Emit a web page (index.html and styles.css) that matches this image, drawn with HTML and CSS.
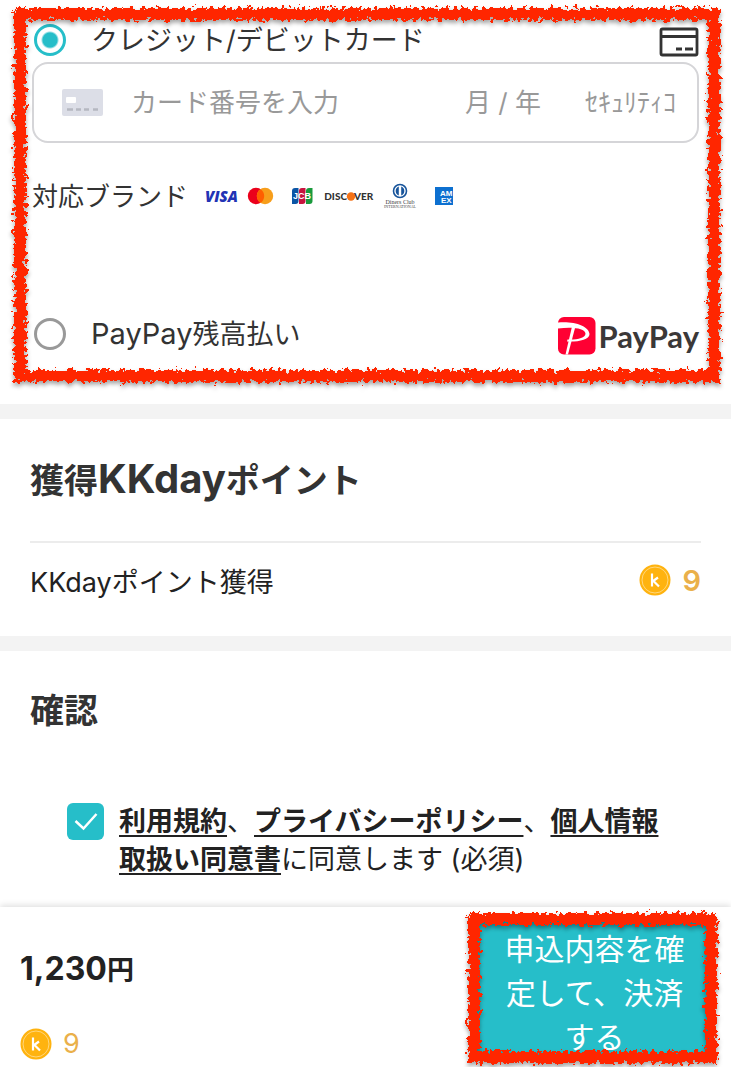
FILE: index.html
```html
<!DOCTYPE html>
<html lang="ja">
<head>
  <meta charset="UTF-8">
  <meta name="viewport" content="width=device-width, initial-scale=1.0">
  <title>お支払い - KKday</title>
  <link rel="stylesheet" href="styles.css">
</head>
<body>

<svg class="defs" width="0" height="0" aria-hidden="true">
  <defs>
    <filter id="brush" x="-5%" y="-8%" width="110%" height="116%">
      <feTurbulence type="fractalNoise" baseFrequency="0.25" numOctaves="2" seed="7" result="noise"/>
      <feDisplacementMap in="SourceGraphic" in2="noise" scale="12" xChannelSelector="R" yChannelSelector="G"/>
    </filter>
    <symbol id="coin" viewBox="0 0 32 32">
      <circle cx="16" cy="16" r="15.5" fill="#ffb30f"/>
      <circle cx="16" cy="16" r="13" fill="none" stroke="#ffd77c" stroke-width="1"/>
      <path d="M13 9.5v13M13.5 17.5l5.5-4M14.5 17l5.5 5.5" fill="none" stroke="#fff" stroke-width="2.2"/>
    </symbol>
  </defs>
</svg>

<form class="page">
  <!-- 支払い方法 -->
  <section class="payment">
    <div class="pay-row">
      <input class="radio" type="radio" name="pay" id="pay-card" checked>
      <label for="pay-card">クレジット/デビットカード</label>
      <svg class="card-icon" width="40" height="30" viewBox="0 0 40 30">
        <rect x="2" y="2" width="36" height="26" rx="1.5" fill="none" stroke="#333" stroke-width="2.8"/>
        <path d="M2 9.5h36" stroke="#333" stroke-width="3"/>
        <path d="M17 22h6M26 22h8" stroke="#333" stroke-width="3"/>
      </svg>
    </div>

    <div class="card-field">
      <svg width="41" height="27" viewBox="0 0 41 27">
        <rect width="41" height="27" rx="2" fill="#dcdee7"/>
        <rect x="4" y="8" width="10" height="6" rx="1" fill="#fff"/>
        <path d="M5 20.5h6M14 20.5h5M22 20.5h5M31 20.5h5" stroke="#b5b8c1" stroke-width="2.5"/>
      </svg>
      <input class="card-number" type="text" aria-label="カード番号" placeholder="カード番号を入力">
      <input class="card-date" type="text" aria-label="有効期限" placeholder="月 / 年">
      <input class="card-code" type="text" aria-label="セキュリティコード" placeholder="ｾｷｭﾘﾃｨｺ">
    </div>

    <div class="brands">
      <span>対応ブランド</span>
      <svg width="250" height="28" viewBox="0 0 250 28">
        <text x="0" y="20" class="visa">VISA</text>
        <circle cx="51" cy="14" r="8.2" fill="#eb001b"/>
        <circle cx="60" cy="14" r="8.2" fill="#f79e1b"/>
        <path d="M55.5 7.15a8.2 8.2 0 0 1 0 13.7a8.2 8.2 0 0 1 0-13.7z" fill="#ff5f00"/>
        <path d="M87 9q0-3 3-3h3.5v13q0 3-3 3h-3.5z" fill="#0b55a5"/>
        <path d="M94 9q0-3 3-3h3.5v13q0 3-3 3h-3.5z" fill="#c8133e"/>
        <path d="M101 9q0-3 3-3h3.5v13q0 3-3 3h-3.5z" fill="#199a3c"/>
        <text x="97" y="17" class="jcb">JCB</text>
        <text x="142" y="18" class="discover disc">DISC</text>
        <circle cx="146" cy="14.5" r="4.2" fill="#f47216"/>
        <text x="149" y="18" class="discover">VER</text>
        <circle cx="195" cy="9" r="6.5" fill="#fff" stroke="#17549b" stroke-width="1.6"/>
        <path d="M193.8 4.5a4.8 4.8 0 0 0 0 9zM196.2 4.5a4.8 4.8 0 0 1 0 9z" fill="#17549b"/>
        <text x="195" y="22" class="diners">Diners Club</text>
        <text x="195" y="26" class="diners-sub">INTERNATIONAL</text>
        <rect x="230" y="5" width="18" height="18" fill="#0d70d0"/>
        <text x="235" y="14" class="amex">AM</text>
        <text x="236" y="21" class="amex">EX</text>
      </svg>
    </div>

    <div class="pay-row paypay-row">
      <input class="radio" type="radio" name="pay" id="pay-paypay">
      <label for="pay-paypay"><span class="latin">PayPay</span>残高払い</label>
      <div class="paypay-logo">
        <svg width="38" height="38" viewBox="0 0 38 38">
          <rect width="37.5" height="37.5" rx="6" fill="#f03"/>
          <path d="M0 5.5C16 4 31 9 31.5 17C31.5 23 20 25 9 24.5L9.5 22.5C19 23 27.5 21 27.5 16.5C27 11.5 15 9.5 0 11.5Z" fill="#fff"/>
          <path d="M14 9.5L17 11L10 37.5H7.5Z" fill="#fff"/>
        </svg>
        <span>PayPay</span>
      </div>
    </div>
    <div class="brush-frame"></div>
  </section>

  <!-- ポイント -->
  <section class="points">
    <h2>獲得<span class="latin">KKday</span>ポイント</h2>
    <div class="points-row">
      <span>KKdayポイント獲得</span>
      <span class="coin-count bold"><svg width="32" height="32"><use href="#coin"/></svg>9</span>
    </div>
  </section>

  <!-- 確認 -->
  <section class="confirm">
    <h2>確認</h2>
    <div class="agree">
      <input class="check" type="checkbox" id="agree" checked>
      <label for="agree"><a href="#terms">利用規約</a>、<a href="#privacy">プライバシーポリシー</a>、<a href="#personal">個人情報取扱い同意書</a>に同意します (必須)</label>
    </div>
  </section>

  <footer class="checkout">
    <div class="total">
      <p class="price">1,230<span>円</span></p>
      <p class="coin-count"><svg width="32" height="32"><use href="#coin"/></svg>9</p>
    </div>
    <div class="submit-wrap">
      <button class="submit-btn" type="button">申込内容を確定して、決済する</button>
      <div class="brush-frame"></div>
    </div>
  </footer>
</form>

</body>
</html>
```
FILE: styles.css
```css
* {
  box-sizing: border-box;
}
body {
  margin: 0;
  background: #fff;
  color: #333;
  font-family: Inter, "Noto Sans CJK JP", sans-serif;
  font-size: 27px;
}
h2, p {
  margin: 0;
}
svg {
  display: block;
  flex-shrink: 0;
}
.defs {
  position: absolute;
}
.page {
  overflow: hidden;
}
section {
  border-bottom: 15px solid #f3f3f3;
}
.latin {
  font-size: 29px;
}
h2 .latin {
  font-size: 40px;
}

/* payment */
.payment {
  position: relative;
  padding: 18px 32px 48px;
}
.pay-row {
  display: flex;
  align-items: center;
  height: 44px;
  padding-left: 2px;
}
.pay-row label {
  flex: 1;
  margin-left: 25px;
  padding-bottom: 4px;
}
.card-icon, .paypay-logo {
  margin-top: 4px;
}
.radio {
  appearance: none;
  width: 32px;
  height: 32px;
  margin: 0;
  border: 3px solid #999;
  border-radius: 50%;
}
.radio:checked {
  border-color: #26bec9;
  background: radial-gradient(circle, #26bec9 7px, #fff 9px);
}
.card-field {
  display: flex;
  align-items: center;
  height: 81px;
  padding: 0 16px 0 28px;
  border: 2px solid #d5d5d8;
  border-radius: 16px;
}
.card-field input {
  min-width: 0;
  padding: 0;
  border: 0;
  outline: 0;
  background: none;
  font: inherit;
  font-size: 26px;
}
.card-field input::placeholder {
  color: #999;
  opacity: 1;
}
.card-field .card-number {
  flex: 1;
  margin-left: 28px;
}
.card-field .card-date {
  width: 100px;
}
.card-field .card-code {
  width: 96px;
  margin-left: 20px;
}
.brands {
  display: flex;
  align-items: center;
  gap: 17px;
  height: 44px;
  margin-top: 31px;
}
.brands span {
  padding-bottom: 4px;
  font-size: 26px;
}
.paypay-row {
  margin-top: 94px;
}
.visa {
  font: italic 800 15px "Open Sans", sans-serif;
  fill: #2233b5;
}
.jcb {
  font: bold 9px "Liberation Sans", sans-serif;
  fill: #fff;
  text-anchor: middle;
}
.discover {
  font: 900 10px Lato, sans-serif;
  fill: #333;
}
.disc {
  text-anchor: end;
}
.diners {
  font: 6px "Liberation Serif", serif;
  fill: #444;
  text-anchor: middle;
}
.diners-sub {
  font: 4px "Liberation Serif", serif;
  fill: #444;
  text-anchor: middle;
}
.amex {
  font: bold 8px "Liberation Sans", sans-serif;
  fill: #fff;
}
.paypay-logo {
  display: flex;
  align-items: center;
  gap: 3px;
  color: #3b3838;
  font: bold 31px/38px Lato, sans-serif;
}

/* hand drawn red frame */
.brush-frame {
  position: absolute;
  inset: 8px 11px 22px 14px;
  border: 12px solid #ff2600;
  filter: url(#brush) drop-shadow(0 3px 2px rgba(0, 0, 0, 0.35));
  pointer-events: none;
}

/* points */
h2 {
  height: 50px;
  font-size: 34px;
  line-height: 50px;
  font-weight: bold;
}
.points {
  padding: 35px 30px 19px;
}
.points-row {
  display: flex;
  align-items: center;
  justify-content: space-between;
  height: 76px;
  margin-top: 37px;
  border-top: 2px solid #ececec;
  color: #222;
}
.coin-count {
  display: flex;
  align-items: center;
  gap: 11px;
  color: #eab04a;
  font-size: 27px;
}
.coin-count.bold {
  font-size: 29px;
  font-weight: 600;
}

/* confirm */
.confirm {
  padding: 35px 64px 28px 30px;
  border: 0;
}
.agree {
  display: flex;
  gap: 15px;
  margin: 67px 0 0 37px;
  color: #222;
  line-height: 38px;
}
.agree a {
  color: inherit;
  font-weight: bold;
  text-underline-offset: 4px;
  text-decoration-thickness: 2px;
}
.check {
  appearance: none;
  flex-shrink: 0;
  width: 37px;
  height: 37px;
  margin: 0;
  border-radius: 6px;
}
.check:checked {
  background: #26bec9 url("data:image/svg+xml,%3Csvg xmlns='http://www.w3.org/2000/svg' viewBox='0 0 37 37'%3E%3Cpath d='M8.5 18l8 7.5L29.5 11' fill='none' stroke='white' stroke-width='2.5'/%3E%3C/svg%3E");
}

/* bottom bar */
.checkout {
  display: flex;
  justify-content: space-between;
  height: 160px;
  padding: 0 13px 0 20px;
  box-shadow: 0 -2px 6px rgba(0, 0, 0, 0.12);
}
.price {
  margin: 42px 0 36px;
  color: #222;
  font-size: 32px;
  line-height: 40px;
  font-weight: bold;
}
.price span {
  font-size: 27px;
}
.total .coin-count {
  line-height: 34px;
}
.submit-wrap {
  position: relative;
  width: 251px;
  height: 152px;
  margin-top: 5px;
  padding: 6px;
}
.submit-btn {
  width: 100%;
  height: 100%;
  padding: 9px 22px 0 26px;
  border: 0;
  background: #26bec9;
  color: #fff;
  font: inherit;
  font-size: 30px;
  line-height: 44px;
}
.submit-wrap .brush-frame {
  inset: 1px;
}
```
